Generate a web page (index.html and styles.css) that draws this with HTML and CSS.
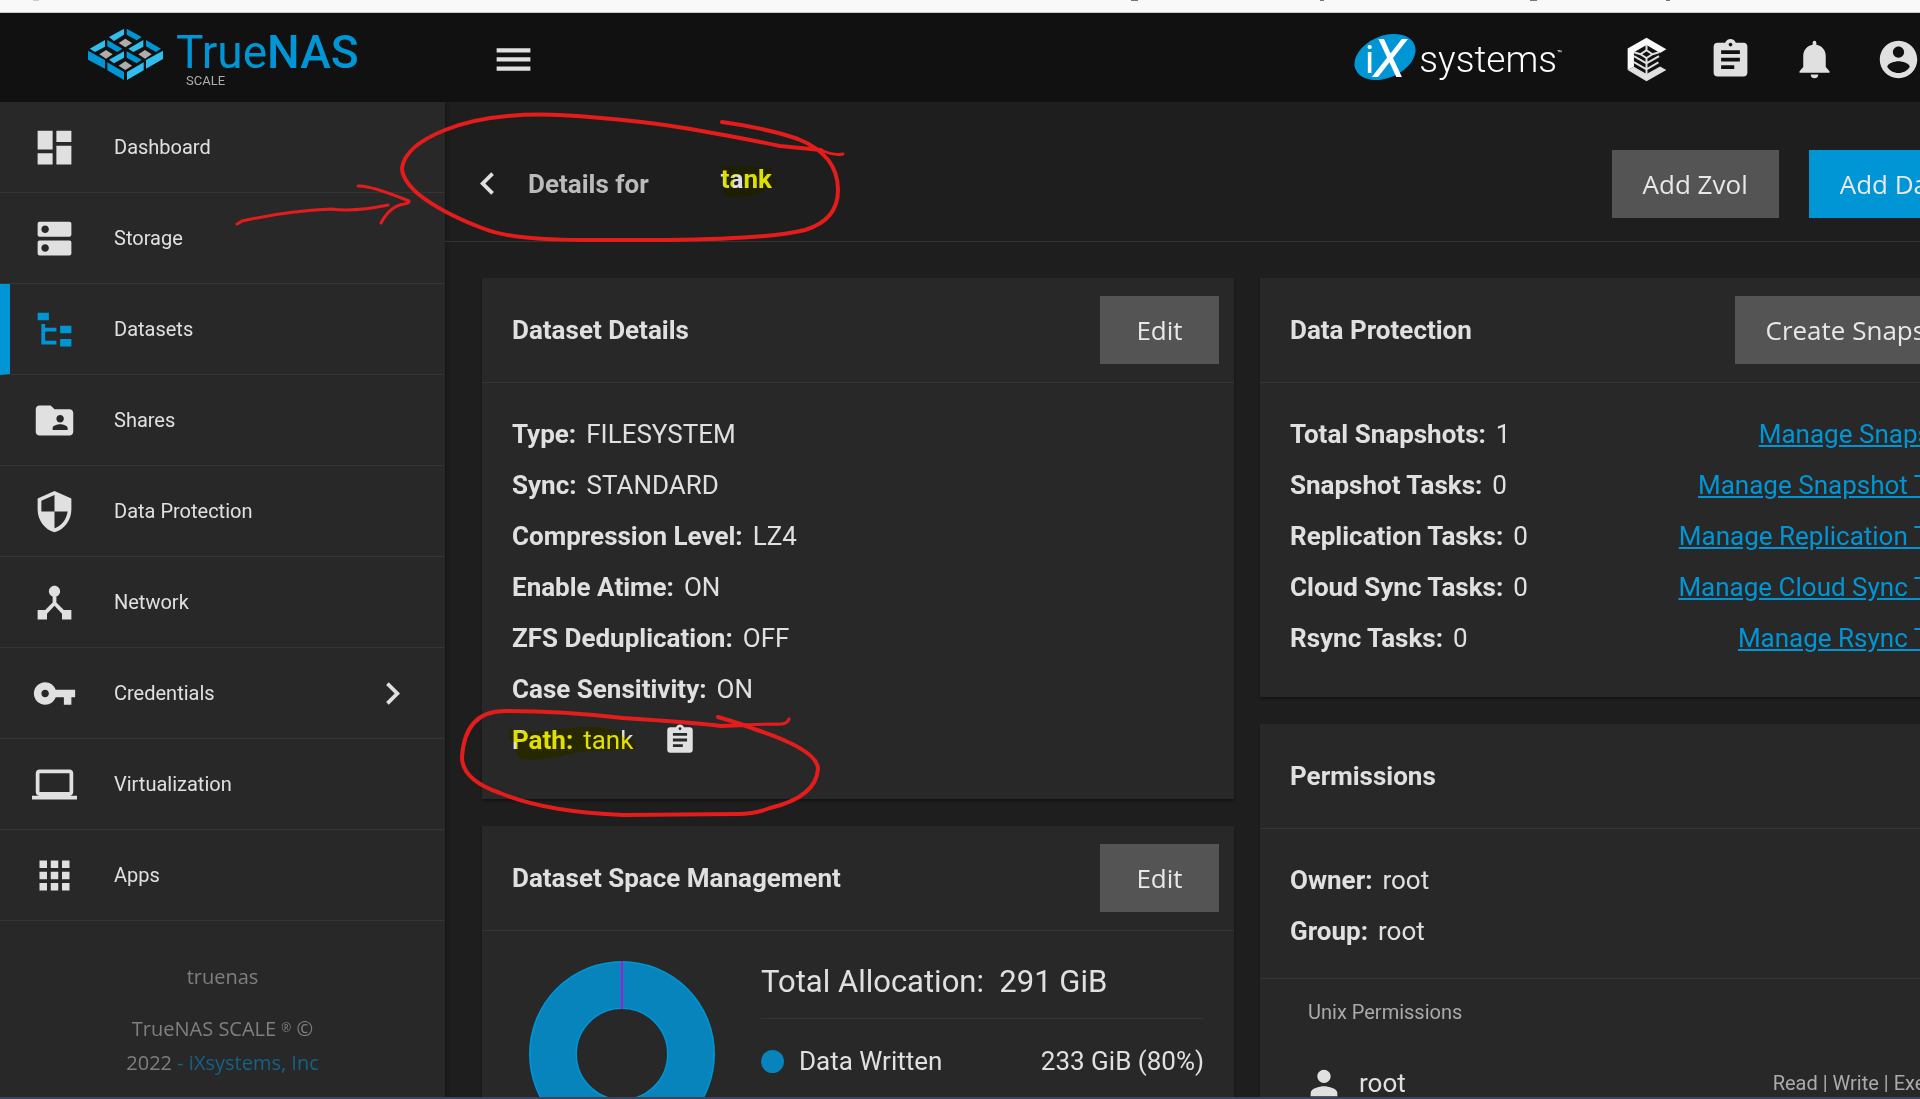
FILE: index.html
```html
<!DOCTYPE html>
<html lang="en">
<head>
    <meta charset="UTF-8">
    <meta name="viewport" content="width=device-width, initial-scale=1.0">
    <title>TrueNAS - Datasets</title>
    <link rel="stylesheet" href="styles.css">
</head>
<body>
    <div class="browser-edge">
        <svg width="1920" height="1" viewBox="0 0 1920 1" fill="#777">
            <rect x="33" width="6" height="1" fill="#ccc"></rect>
            <rect x="1131" width="7" height="1"></rect>
            <rect x="1320" width="4" height="1"></rect>
            <rect x="1530" width="7" height="1"></rect>
            <rect x="1666" width="4" height="1"></rect>
        </svg>
    </div>

    <div class="viewport">
        <div class="app">
            <header class="topbar">
                <a class="brand" href="#">
                    <svg class="brand-mark" viewBox="0 0 270 198">
                        <g fill="#31beec">
                            <path d="M87 45L132 20V38L102 57z"></path>
                            <path d="M29 80L75 54V74L45 90z"></path>
                            <path d="M145 80L190 54V74L160 90z"></path>
                            <path d="M87 113L132 88V107L102 124z"></path>
                            <path d="M249 86V111L198 140V114z"></path>
                            <path d="M141 150L191 121V145L141 174z"></path>
                        </g>
                        <g fill="#0095d5">
                            <path d="M140 20L185 45L170 55L140 38z"></path>
                            <path d="M82 54L127 80L112 90L82 73z"></path>
                            <path d="M198 54L243 80L228 90L198 73z"></path>
                            <path d="M140 88L185 113L170 124L140 107z"></path>
                            <path d="M24 86L75 114V140L24 113z"></path>
                            <path d="M82 121L132 150V174L82 145z"></path>
                        </g>
                        <g fill="#aeacac">
                            <path d="M136 50l20 13-20 13-20-13z"></path>
                            <path d="M78 84l20 13-20 13-20-13z"></path>
                            <path d="M195 84l20 13-20 13-20-13z"></path>
                            <path d="M136 118l20 13-20 13-20-13z"></path>
                        </g>
                    </svg>
                    <span class="brand-text">
                        <span class="brand-name">True<b>NAS</b></span>
                        <span class="brand-edition">SCALE</span>
                    </span>
                </a>
                <button class="icon-btn" aria-label="Toggle menu">
                    <svg class="icon" viewBox="0 0 24 24"><path d="M3 18h18v-2.300H3V18zm0-4.900h18v-2.300H3v2.300zM3 6v2.300h18V6H3z"></path></svg>
                </button>
                <a class="ix-logo" href="#">
                    <svg class="ix-mark" viewBox="0 0 64 48">
                        <ellipse cx="32" cy="24" rx="32" ry="21" transform="rotate(-23 32 24)" fill="#0095d5"></ellipse>
                        <text class="ix-i" x="12" y="40">i</text>
                        <text class="ix-x" x="20" y="44">X</text>
                    </svg>
                    <span class="ix-name">systems</span><span class="ix-tm">™</span>
                </a>
                <nav class="top-actions">
                    <button class="icon-btn" aria-label="TrueCommand">
                        <svg class="icon" viewBox="-8 0 136 136">
                            <path fill="#fafafa" d="M60 2L120 37L101 48L60 24L22 46V90L3 100V35z"></path>
                            <path d="M3 100L22 90L60 112L101 89L120 100L60 134z"></path>
                            <path class="line" d="M60 22V40M22 46L42 52M98 46L78 52M60 40L78 52L60 64L42 52zM22 58L60 80L98 58M22 76L60 98L96 77M60 64V114"></path>
                        </svg>
                    </button>
                    <button class="icon-btn" aria-label="Jobs">
                        <svg class="icon" viewBox="0 0 24 24"><path d="M19 3h-4.180C14.400 1.840 13.300 1 12 1c-1.300 0-2.400.84-2.820 2H5c-1.100 0-2 .9-2 2v14c0 1.100.9 2 2 2h14c1.100 0 2-.9 2-2V5c0-1.100-.9-2-2-2zm-7 0c.55 0 1 .45 1 1s-.45 1-1 1-1-.45-1-1 .45-1 1-1zm2 14H7v-2h7v2zm3-4H7v-2h10v2zm0-4H7V7h10v2z"></path></svg>
                    </button>
                    <button class="icon-btn" aria-label="Alerts">
                        <svg class="icon" viewBox="0 0 24 24"><path d="M14 20a2 2 0 0 1-4 0h4zM12 2a1 1 0 0 0-1 1v1.100C8.200 4.500 6 7 6 10v6l-2 2.200V19h16v-.8L18 16v-6c0-3-2.200-5.500-5-5.900V3a1 1 0 0 0-1-1z"></path></svg>
                    </button>
                    <button class="icon-btn" aria-label="Account">
                        <svg class="icon" viewBox="0 0 24 24"><path d="M12 2C6.480 2 2 6.480 2 12s4.480 10 10 10 10-4.480 10-10S17.520 2 12 2zm0 3c1.660 0 3 1.340 3 3s-1.340 3-3 3-3-1.340-3-3 1.340-3 3-3zm0 14.200c-2.500 0-4.710-1.280-6-3.220.030-1.990 4-3.080 6-3.080 1.990 0 5.970 1.090 6 3.080-1.290 1.940-3.500 3.220-6 3.220z"></path></svg>
                    </button>
                </nav>
            </header>

            <aside class="sidebar">
                <nav class="menu">
                    <a class="menu-item" href="#">
                        <svg class="icon" viewBox="0 0 24 24"><path d="M3 13h8V3H3v10zm0 8h8v-6H3v6zm10 0h8V11h-8v10zm0-18v6h8V3h-8z"></path></svg>
                        <span>Dashboard</span>
                    </a>
                    <a class="menu-item" href="#">
                        <svg class="icon" viewBox="0 0 24 24"><path d="M20 13H4c-.55 0-1 .45-1 1v6c0 .55.45 1 1 1h16c.55 0 1-.45 1-1v-6c0-.55-.45-1-1-1zM7 19c-1.100 0-2-.9-2-2s.9-2 2-2 2 .9 2 2-.9 2-2 2zM20 3H4c-.55 0-1 .45-1 1v6c0 .55.45 1 1 1h16c.55 0 1-.45 1-1V4c0-.55-.45-1-1-1zM7 9c-1.100 0-2-.9-2-2s.9-2 2-2 2 .9 2 2-.9 2-2 2z"></path></svg>
                        <span>Storage</span>
                    </a>
                    <a class="menu-item active" href="#">
                        <svg class="icon" viewBox="0 0 24 24"><path d="M3 3h6v4H3V3zM15 10h6v4h-6v-4zM15 17h6v4h-6v-4zM13 13H7v5h6v2H5V9h2v2h6v2z"></path></svg>
                        <span>Datasets</span>
                    </a>
                    <a class="menu-item" href="#">
                        <svg class="icon" viewBox="0 0 24 24"><path d="M20 6h-8l-2-2H4c-1.100 0-1.990.9-1.990 2L2 18c0 1.100.9 2 2 2h16c1.100 0 2-.9 2-2V8c0-1.100-.9-2-2-2zm-5 3c1.100 0 2 .9 2 2s-.9 2-2 2-2-.9-2-2 .9-2 2-2zm4 8h-8v-1c0-1.330 2.670-2 4-2s4 .67 4 2v1z"></path></svg>
                        <span>Shares</span>
                    </a>
                    <a class="menu-item" href="#">
                        <svg class="icon" viewBox="0 0 24 24"><path d="M12 1L3 5v6c0 5.550 3.840 10.740 9 12 5.160-1.260 9-6.450 9-12V5l-9-4zm0 10.990h7c-.53 4.120-3.280 7.790-7 8.940V12H5V6.300l7-3.110v8.800z"></path></svg>
                        <span>Data Protection</span>
                    </a>
                    <a class="menu-item" href="#">
                        <svg class="icon" viewBox="0 0 24 24"><path d="M17 16l-4-4V8.820C14.160 8.400 15 7.300 15 6c0-1.660-1.340-3-3-3S9 4.340 9 6c0 1.300.84 2.400 2 2.820V12l-4 4H3v5h5v-3.050l4-4.200 4 4.200V21h5v-5h-4z"></path></svg>
                        <span>Network</span>
                    </a>
                    <a class="menu-item" href="#">
                        <svg class="icon" viewBox="0 0 24 24"><path d="M12.650 10C11.830 7.670 9.610 6 7 6c-3.310 0-6 2.690-6 6s2.690 6 6 6c2.610 0 4.830-1.670 5.650-4H17v4h4v-4h2v-4H12.650zM7 14c-1.100 0-2-.9-2-2s.9-2 2-2 2 .9 2 2-.9 2-2 2z"></path></svg>
                        <span>Credentials</span>
                        <svg class="icon chevron" viewBox="0 0 24 24"><path d="M10 6L8.590 7.410 13.170 12l-4.580 4.590L10 18l6-6z"></path></svg>
                    </a>
                    <a class="menu-item" href="#">
                        <svg class="icon" viewBox="0 0 24 24"><path d="M20 18c1.100 0 1.990-.9 1.990-2L22 6c0-1.100-.9-2-2-2H4c-1.100 0-2 .9-2 2v10c0 1.100.9 2 2 2H0v2h24v-2h-4zM4 6h16v10H4V6z"></path></svg>
                        <span>Virtualization</span>
                    </a>
                    <a class="menu-item" href="#">
                        <svg class="icon" viewBox="0 0 24 24"><path d="M4 8h4V4H4v4zm6 12h4v-4h-4v4zm-6 0h4v-4H4v4zm0-6h4v-4H4v4zm6 0h4v-4h-4v4zm6-10v4h4V4h-4zm-6 4h4V4h-4v4zm6 6h4v-4h-4v4zm0 6h4v-4h-4v4z"></path></svg>
                        <span>Apps</span>
                    </a>
                </nav>
                <footer class="sidebar-footer">
                    <p>truenas</p>
                    <p>TrueNAS SCALE <span class="reg">®</span> ©<br>2022 <a href="#">- iXsystems, Inc</a></p>
                </footer>
            </aside>

            <main class="content">
                <div class="page-header">
                    <button class="back-btn" aria-label="Back">
                        <svg class="icon" viewBox="0 0 24 24"><path d="M15.410 7.410L14 6l-6 6 6 6 1.410-1.410L10.830 12z"></path></svg>
                    </button>
                    <h1>Details for</h1>
                    <span class="dataset-name">tank</span>
                    <div class="page-actions">
                        <button class="btn">Add Zvol</button>
                        <button class="btn btn-primary">Add Dataset</button>
                    </div>
                </div>

                <div class="cards">
                    <div class="column">
                        <section class="card">
                            <div class="card-header">
                                <h2>Dataset Details</h2>
                                <button class="btn">Edit</button>
                            </div>
                            <div class="card-body">
                                <div class="row"><b>Type:</b> FILESYSTEM</div>
                                <div class="row"><b>Sync:</b> STANDARD</div>
                                <div class="row"><b>Compression Level:</b> LZ4</div>
                                <div class="row"><b>Enable Atime:</b> ON</div>
                                <div class="row"><b>ZFS Deduplication:</b> OFF</div>
                                <div class="row"><b>Case Sensitivity:</b> ON</div>
                                <div class="row">
                                    <b>Path:</b> tank
                                    <button class="copy-btn" aria-label="Copy path">
                                        <svg class="icon" viewBox="0 0 24 24"><path d="M19 3h-4.180C14.400 1.840 13.300 1 12 1c-1.300 0-2.400.84-2.820 2H5c-1.100 0-2 .9-2 2v14c0 1.100.9 2 2 2h14c1.100 0 2-.9 2-2V5c0-1.100-.9-2-2-2zm-7 0c.55 0 1 .45 1 1s-.45 1-1 1-1-.45-1-1 .45-1 1-1zm2 14H7v-2h7v2zm3-4H7v-2h10v2zm0-4H7V7h10v2z"></path></svg>
                                    </button>
                                </div>
                            </div>
                        </section>

                        <section class="card">
                            <div class="card-header">
                                <h2>Dataset Space Management</h2>
                                <button class="btn">Edit</button>
                            </div>
                            <div class="card-body space">
                                <svg class="donut" viewBox="0 0 186 186">
                                    <circle class="donut-edge" cx="93" cy="93" r="69" stroke-width="48"></circle>
                                    <circle class="donut-fill" cx="93" cy="93" r="69" stroke-width="45"></circle>
                                    <path d="M93 0V48" stroke="#a81cd0" stroke-width="2"></path>
                                </svg>
                                <div class="allocation">
                                    <h3>Total Allocation: &nbsp;291 GiB</h3>
                                    <div class="legend">
                                        <span class="dot"></span>
                                        <span>Data Written</span>
                                        <span class="legend-value">233 GiB (80%)</span>
                                    </div>
                                </div>
                            </div>
                        </section>
                    </div>

                    <div class="column">
                        <section class="card">
                            <div class="card-header">
                                <h2>Data Protection</h2>
                                <button class="btn">Create Snapshot</button>
                            </div>
                            <div class="card-body">
                                <div class="row"><b>Total Snapshots:</b> 1 <a href="#">Manage Snapshots</a></div>
                                <div class="row"><b>Snapshot Tasks:</b> 0 <a href="#">Manage Snapshot Tasks</a></div>
                                <div class="row"><b>Replication Tasks:</b> 0 <a href="#">Manage Replication Tasks</a></div>
                                <div class="row"><b>Cloud Sync Tasks:</b> 0 <a href="#">Manage Cloud Sync Tasks</a></div>
                                <div class="row"><b>Rsync Tasks:</b> 0 <a href="#">Manage Rsync Tasks</a></div>
                            </div>
                        </section>

                        <section class="card">
                            <div class="card-header">
                                <h2>Permissions</h2>
                            </div>
                            <div class="card-body owner">
                                <div class="row"><b>Owner:</b> root</div>
                                <div class="row"><b>Group:</b> root</div>
                            </div>
                            <div class="unix">
                                <h4>Unix Permissions</h4>
                                <div class="unix-row">
                                    <svg class="icon" viewBox="0 0 24 24"><path d="M12 12c2.210 0 4-1.790 4-4s-1.790-4-4-4-4 1.790-4 4 1.790 4 4 4zm0 2c-2.670 0-8 1.340-8 4v2h16v-2c0-2.660-5.330-4-8-4z"></path></svg>
                                    <span>root</span>
                                    <span class="unix-access">Read | Write | Execute</span>
                                </div>
                            </div>
                        </section>
                    </div>
                </div>
            </main>
        </div>
    </div>
    <div class="taskbar-edge"></div>

    <!-- Pen and highlighter marks drawn over the page -->
    <svg class="highlighter" width="1000" height="900">
        <path d="M722 166L749 166L772 168L773 177L776 180L774 187L749 196L725 197L724 188zM733 175v13h11v-13z"></path>
        <path d="M509 729L529 732L578 727L599 727L621 732L623 737L635 740L636 749L578 752L558 757L533 760L521 759L516 753L516 742L510 742z"></path>
    </svg>
    <svg class="pen" width="1000" height="900">
        <path d="M722 122Q770 129 798 139Q838 155 838 190Q838 220 805 230Q770 239 666 240L584 240Q510 240 482 228Q440 212 417 193Q402 179 402 168Q405 146 445 130Q490 112 560 115Q645 120 707 132Q747 139 780 146L821 150"></path>
        <path class="thin" d="M821 150Q834 156 843 154"></path>
        <path class="thin" d="M237 224Q239 223 242 221Q286 211 331 209Q355 212 388 205"></path>
        <path class="thin" d="M358 186Q370 185 409 201Q410 203 404 204Q390 206 381 223"></path>
        <path d="M718 717Q745 725 754 729Q818 750 818 769Q816 797 770 808Q755 814 738 814L623 815Q545 812 500 793Q462 780 462 757Q465 711 505 711Q562 711 623 718Q700 723 721 726L745 725"></path>
        <path class="thin" d="M745 725Q760 724 777 724Q787 725 789 719"></path>
    </svg>
</body>
</html>
```
FILE: styles.css
```css
* {
    box-sizing: border-box;
}

body {
    margin: 0;
    height: 100vh;
    display: flex;
    flex-direction: column;
    overflow: hidden;
    background-color: #1e1e1e;
    color: #e0e0e0;
    font-family: Roboto, sans-serif;
    font-size: 26px;
}

h1, h2, h3, h4, p {
    margin: 0;
}

button {
    border: none;
    padding: 0;
    background: none;
    color: inherit;
    font: inherit;
    cursor: pointer;
}

a {
    color: #0095d5;
}

.icon {
    width: 45px;
    height: 45px;
    flex: none;
    display: block;
    fill: #e0e0e0;
}

.browser-edge {
    height: 13px;
    flex: none;
    overflow: hidden;
    background-color: #f9f9f9;
    border-bottom: 1px solid #ccc;
}

.browser-edge svg {
    display: block;
}

.taskbar-edge {
    height: 2px;
    flex: none;
    background-color: #3a4462;
}

/* The app is a little wider than the window and is cut at the right */
.viewport {
    flex: 1;
    min-height: 0;
    overflow: hidden;
}

.app {
    width: calc(100% + 129px);
    display: grid;
    grid-template-columns: 445px 1fr;
}

/* Top bar */
.topbar {
    grid-column: 1 / 3;
    display: flex;
    align-items: center;
    height: 89px;
    padding-top: 3px;
    padding-right: 127px;
    background-color: #111;
}

.brand {
    display: flex;
    align-items: center;
    gap: 6px;
    width: 445px;
    margin-right: 44px;
    padding-left: 80px;
    text-decoration: none;
}

.brand-mark {
    width: 90px;
    height: 66px;
    margin-bottom: 8px;
}

.brand-text {
    display: flex;
    flex-direction: column;
}

.brand-name {
    font-size: 46px;
    line-height: 44px;
    font-weight: 400;
}

.brand-name b {
    font-weight: 500;
}

.brand-edition {
    padding-left: 10px;
    color: #aeacac;
    font-size: 13px;
    line-height: 14px;
}

.icon-btn {
    display: flex;
    justify-content: center;
    width: 48px;
}

.icon-btn .line {
    fill: none;
    stroke: #e0e0e0;
    stroke-width: 6;
}

.ix-logo {
    display: flex;
    align-items: center;
    margin-left: auto;
    margin-right: 60px;
    color: #fff;
    text-decoration: none;
}

.ix-mark {
    width: 64px;
    height: 48px;
    margin-right: 2px;
    margin-bottom: 4px;
    fill: #fff;
}

.ix-i {
    font-size: 38px;
}

.ix-x {
    font-size: 54px;
    font-style: italic;
}

.ix-name {
    font-size: 37px;
    font-weight: 300;
}

.ix-tm {
    align-self: flex-start;
    font-size: 8px;
    padding-top: 16px;
}

.top-actions {
    display: flex;
    gap: 36px;
}

/* Sidebar */
.sidebar {
    background-color: #282828;
    box-shadow: 0 0 4px #111;
}

.menu-item {
    display: flex;
    align-items: center;
    gap: 37px;
    height: 91px;
    padding: 0 30px 0 32px;
    border-bottom: 1px solid #343434;
    color: #e0e0e0;
    font-size: 20px;
    text-decoration: none;
}

.menu-item.active {
    padding-left: 22px;
    border-left: 10px solid #0095d5;
}

.menu-item.active .icon {
    fill: #0095d5;
}

.menu-item .chevron {
    margin-left: auto;
}

.sidebar-footer {
    padding-top: 39px;
    color: #7f7f7f;
    font-family: "Open Sans", sans-serif;
    font-size: 20px;
    line-height: 34px;
    text-align: center;
}

.sidebar-footer p {
    margin-bottom: 18px;
}

.sidebar-footer .reg {
    font-size: 12px;
    vertical-align: 4px;
    line-height: 1;
}

.sidebar-footer a {
    color: #176184;
    text-decoration: none;
}

/* Page header */
.page-header {
    display: flex;
    align-items: center;
    height: 140px;
    padding: 24px 30px 0 20px;
    border-bottom: 1px solid #343434;
}

.back-btn {
    margin-right: 18px;
}

.page-header h1 {
    color: #bbb;
    font-size: 26px;
}

.dataset-name {
    margin-left: 72px;
    padding-bottom: 10px;
    font-weight: bold;
}

.page-actions {
    display: flex;
    gap: 30px;
    margin-left: auto;
}

.btn {
    height: 68px;
    min-width: 119px;
    padding: 0 31px;
    background-color: #545454;
    color: #e8e8e8;
    font-family: "Open Sans", sans-serif;
}

.btn-primary {
    background-color: #0095d5;
}

/* Cards */
.cards {
    display: grid;
    grid-template-columns: 1fr 1fr;
    gap: 26px;
    padding: 36px 37px;
}

.column {
    display: flex;
    flex-direction: column;
    gap: 27px;
}

.card {
    background-color: #282828;
    box-shadow: 0 2px 2px #141414;
}

.card-header {
    display: flex;
    align-items: center;
    justify-content: space-between;
    min-height: 105px;
    padding: 0 15px 0 30px;
    border-bottom: 1px solid #343434;
}

.card-header h2 {
    font-size: 26px;
}

.card-body {
    padding: 25px 30px 34px;
}

.row {
    display: flex;
    align-items: center;
    gap: 10px;
    height: 51px;
}

.row a {
    margin-left: auto;
}

.copy-btn {
    margin-left: 20px;
}

.copy-btn .icon {
    width: 34px;
    height: 34px;
}

/* Space management */
.space {
    display: flex;
    gap: 46px;
    padding-left: 47px;
    padding-top: 30px;
}

.donut {
    flex: none;
    width: 186px;
    height: 186px;
}

.donut-edge,
.donut-fill {
    fill: none;
    stroke: #0095d5;
}

.donut-fill {
    stroke: #0684bb;
}

.allocation {
    flex: 1;
}

.allocation h3 {
    padding-bottom: 16px;
    border-bottom: 1px solid #343434;
    font-size: 31px;
    font-weight: 400;
    line-height: 41px;
}

.legend {
    display: flex;
    align-items: center;
    gap: 15px;
    height: 84px;
}

.dot {
    width: 23px;
    height: 23px;
    border-radius: 50%;
    background-color: #0684bb;
}

.legend-value {
    margin-left: auto;
}

/* Permissions */
.owner {
    padding-bottom: 22px;
    border-bottom: 1px solid #343434;
}

.unix {
    padding: 16px 48px;
}

.unix h4 {
    color: #aaa;
    font-size: 20px;
    font-weight: 400;
    line-height: 34px;
}

.unix-row {
    display: flex;
    align-items: center;
    gap: 15px;
    padding-top: 34px;
}

.unix-row .icon {
    width: 40px;
    height: 40px;
    margin-left: -4px;
}

.unix-access {
    margin-left: auto;
    color: #aaa;
    font-size: 20px;
}

/* Marks over the page */
.highlighter,
.pen {
    position: absolute;
    top: 0;
    left: 0;
    pointer-events: none;
}

.highlighter {
    fill: #ff0;
    fill-rule: evenodd;
    mix-blend-mode: multiply;
}

.pen {
    fill: none;
    stroke: #e51c1c;
    stroke-width: 4;
    stroke-linecap: round;
    stroke-linejoin: round;
}

.pen .thin {
    stroke-width: 3;
}
```
